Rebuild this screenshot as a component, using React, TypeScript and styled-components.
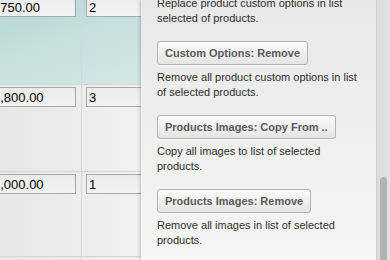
import React from 'react'
import styled, { createGlobalStyle } from 'styled-components'

const GlobalStyle = createGlobalStyle`
  body {
    margin: 0;
    overflow: hidden;
    font-family: "Liberation Sans", Arial, sans-serif;
  }
`

const rows = [
  { price: '1750.00', qty: '2', height: 89, active: true },
  { price: '1,800.00', qty: '3', height: 86, active: false },
  { price: '2,000.00', qty: '1', height: 84, active: false },
  { price: '', qty: '', height: 40, active: false },
]

const actions = [
  {
    label: 'Custom Options: Remove',
    text: 'Remove all product custom options in list of selected products.',
  },
  {
    label: 'Products Images: Copy From ..',
    text: 'Copy all images to list of selected products.',
  },
  {
    label: 'Products Images: Remove',
    text: 'Remove all images in list of selected products.',
  },
]

const App = () => {
  return (
    <Screen>
      <GlobalStyle />
      <Grid>
        <GridInner>
          {rows.map((r, i) => (
            <Row key={i} $active={r.active} $h={r.height}>
              <PriceCell>{r.price && <Field readOnly value={r.price} />}</PriceCell>
              <QtyCell>{r.qty && <Field readOnly value={r.qty} $w={80} />}</QtyCell>
            </Row>
          ))}
        </GridInner>
      </Grid>
      <Panel>
        <PanelBody>
          <Desc $first>Replace product custom options in list selected of products.</Desc>
          {actions.map((a) => (
            <React.Fragment key={a.label}>
              <ActionButton>{a.label}</ActionButton>
              <Desc>{a.text}</Desc>
            </React.Fragment>
          ))}
        </PanelBody>
        <Track>
          <Thumb />
        </Track>
      </Panel>
    </Screen>
  )
}

export default App

const Screen = styled.div`
  display: flex;
  width: 390px;
  height: 260px;
  overflow: hidden;
  background: #ececec;
`
const Grid = styled.div`
  width: 141px;
  flex-shrink: 0;
  overflow: hidden;
  background: linear-gradient(to right, #e6e6e6, #f0f0f0);
`
const GridInner = styled.div`
  margin-left: -40px;
  margin-top: -5px;
`
const Row = styled.div<{ $active?: boolean; $h: number }>`
  display: grid;
  grid-template-columns: 122px 1fr;
  height: ${(p) => p.$h}px;
  border-bottom: 1px solid #d4d4d4;
  background: ${(p) =>
    p.$active
      ? 'linear-gradient(160deg, #b5d2d2 0%, #c6dfdf 55%, #d2e7e7 100%)'
      : 'linear-gradient(to right, #e4e4e4, #f1f1f1)'};
`
const PriceCell = styled.div`
  padding: 2px 5px 0 30px;
  border-right: 1px solid #d6d6d6;
`
const QtyCell = styled.div`
  padding: 2px 0 0 4px;
  overflow: hidden;
`
const Field = styled.input<{ $w?: number }>`
  box-sizing: border-box;
  display: block;
  width: ${(p) => (p.$w ? `${p.$w}px` : '100%')};
  height: 20px;
  margin: 0;
  padding: 0 2px;
  border: 1px solid #a8a8a8;
  border-radius: 0;
  background: linear-gradient(to bottom, #ececec, #f3f3f3);
  font-family: "Liberation Sans", Arial, sans-serif;
  font-size: 13px;
  color: #000;
  outline: none;
`
const Panel = styled.div`
  position: relative;
  z-index: 1;
  flex: 1;
  display: flex;
  background: linear-gradient(to bottom, #e8e8e8, #f6f6f6);
  box-shadow: -1px 0 3px rgba(0, 0, 0, 0.22);
`
const PanelBody = styled.div`
  flex: 1;
  padding-left: 16px;
  overflow: hidden;
`
const Desc = styled.p<{ $first?: boolean }>`
  width: 206px;
  margin: ${(p) => (p.$first ? '-4px' : '5px')} 0 0;
  font-size: 11px;
  line-height: 15px;
  color: #2e2e2e;
`
const ActionButton = styled.button`
  display: block;
  box-sizing: border-box;
  height: 24px;
  margin-top: 15px;
  padding: 0 7px;
  border: 1px solid #b3b3b3;
  border-radius: 3px;
  background: linear-gradient(to bottom, #fbfbfb, #e4e4e4);
  box-shadow: 0 1px 0 rgba(255, 255, 255, 0.6);
  font-family: "Liberation Sans", Arial, sans-serif;
  font-size: 11px;
  font-weight: bold;
  color: #5a5a5a;
  cursor: pointer;
`
const Track = styled.div`
  width: 13px;
  flex-shrink: 0;
  padding-top: 177px;
  border-left: 1px solid #cdcdcd;
  background: linear-gradient(to right, #dadada, #e4e4e4);
`
const Thumb = styled.div`
  width: 7px;
  height: 100px;
  margin-left: 3px;
  border-radius: 4px;
  background: #b2b2b2;
`
